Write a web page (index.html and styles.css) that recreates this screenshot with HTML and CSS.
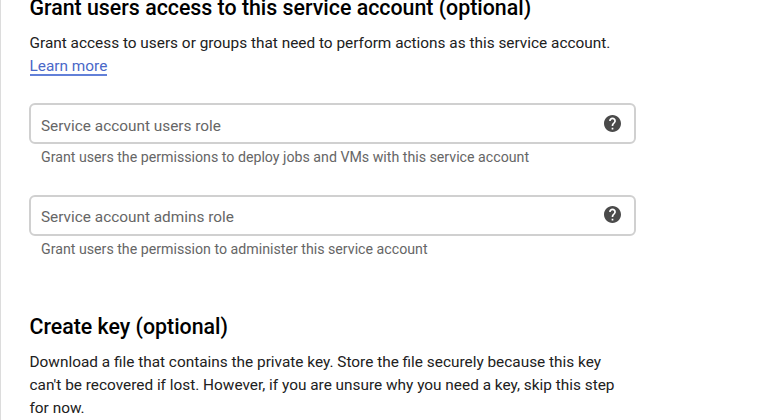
FILE: index.html
```
<!DOCTYPE html>
<html lang="en">
<head>
    <meta charset="UTF-8">
    <title>Create service account</title>
    <link rel="stylesheet" href="styles.css">
</head>
<body>
<div class="panel">
    <section class="access">
        <h2>Grant users access to this service account (optional)</h2>
        <p>Grant access to users or groups that need to perform actions as this service account.<br>
            <a class="link" href="#">Learn more</a></p>

        <div class="field">
            <div class="box">
                <span class="label">Service account users role</span>
                <svg class="help" viewBox="2 2 20 20"><path d="M12 2C6.48 2 2 6.48 2 12s4.48 10 10 10 10-4.48 10-10S17.52 2 12 2zm1 17h-2v-2h2v2zm2.07-7.75l-.9.92C13.45 12.9 13 13.5 13 15h-2v-.5c0-1.1.45-2.1 1.17-2.83l1.24-1.26c.37-.36.59-.86.59-1.41 0-1.1-.9-2-2-2s-2 .9-2 2H8c0-2.21 1.79-4 4-4s4 1.79 4 4c0 .88-.36 1.68-.93 2.25z"/></svg>
            </div>
            <div class="hint">Grant users the permissions to deploy jobs and VMs with this service account</div>
        </div>

        <div class="field">
            <div class="box">
                <span class="label">Service account admins role</span>
                <svg class="help" viewBox="2 2 20 20"><path d="M12 2C6.48 2 2 6.48 2 12s4.48 10 10 10 10-4.48 10-10S17.52 2 12 2zm1 17h-2v-2h2v2zm2.07-7.75l-.9.92C13.45 12.9 13 13.5 13 15h-2v-.5c0-1.1.45-2.1 1.17-2.83l1.24-1.26c.37-.36.59-.86.59-1.41 0-1.1-.9-2-2-2s-2 .9-2 2H8c0-2.21 1.79-4 4-4s4 1.79 4 4c0 .88-.36 1.68-.93 2.25z"/></svg>
            </div>
            <div class="hint">Grant users the permission to administer this service account</div>
        </div>
    </section>

    <section class="key">
        <h2>Create key (optional)</h2>
        <p>Download a file that contains the private key. Store the file securely because this key<br>
            can't be recovered if lost. However, if you are unsure why you need a key, skip this step<br>
            for now.</p>
    </section>
</div>
</body>
</html>
```
FILE: styles.css
```
* {
    margin: 0;
    padding: 0;
    box-sizing: border-box;
}

body {
    background-color: #fff;
    color: #212121;
    font-family: Roboto, "Liberation Sans", sans-serif;
    overflow: hidden;
}

.panel {
    height: 420px;
    border-left: 1px solid #dcdcdc;
    padding-left: 28px;
    overflow: hidden;
}

h2 {
    padding-left: 0.5px;
    color: #000;
    font-size: 21.35px;
    font-weight: 500;
    line-height: 24px;
    white-space: nowrap;
}

p {
    padding-left: 0.5px;
    font-size: 15.39px;
    line-height: 23px;
    white-space: nowrap;
}

.access h2 {
    margin-top: -4px;
    margin-bottom: 12px;
}

.access p {
    margin-bottom: 25px;
}

.link {
    display: inline-block;
    color: #4a68c8;
    line-height: 16px;
    text-decoration: none;
    border-bottom: 2px solid #6280d8;
}

.field {
    width: 607px;
    height: 91.5px;
}

.box {
    display: flex;
    align-items: center;
    justify-content: space-between;
    height: 41px;
    padding: 0 13px 0 10px;
    border: 2px solid #d0d0d0;
    border-radius: 6px;
}

.label {
    padding-top: 4px;
    color: #666;
    font-size: 15.37px;
}

.help {
    width: 17px;
    height: 17px;
    margin-bottom: 1px;
    fill: #4a4a4a;
}

.hint {
    padding: 4px 0 0 12px;
    color: #666;
    font-size: 14.2px;
    line-height: 18px;
}

.key {
    padding-top: 29px;
}

.key h2 {
    margin-bottom: 12px;
}
```
